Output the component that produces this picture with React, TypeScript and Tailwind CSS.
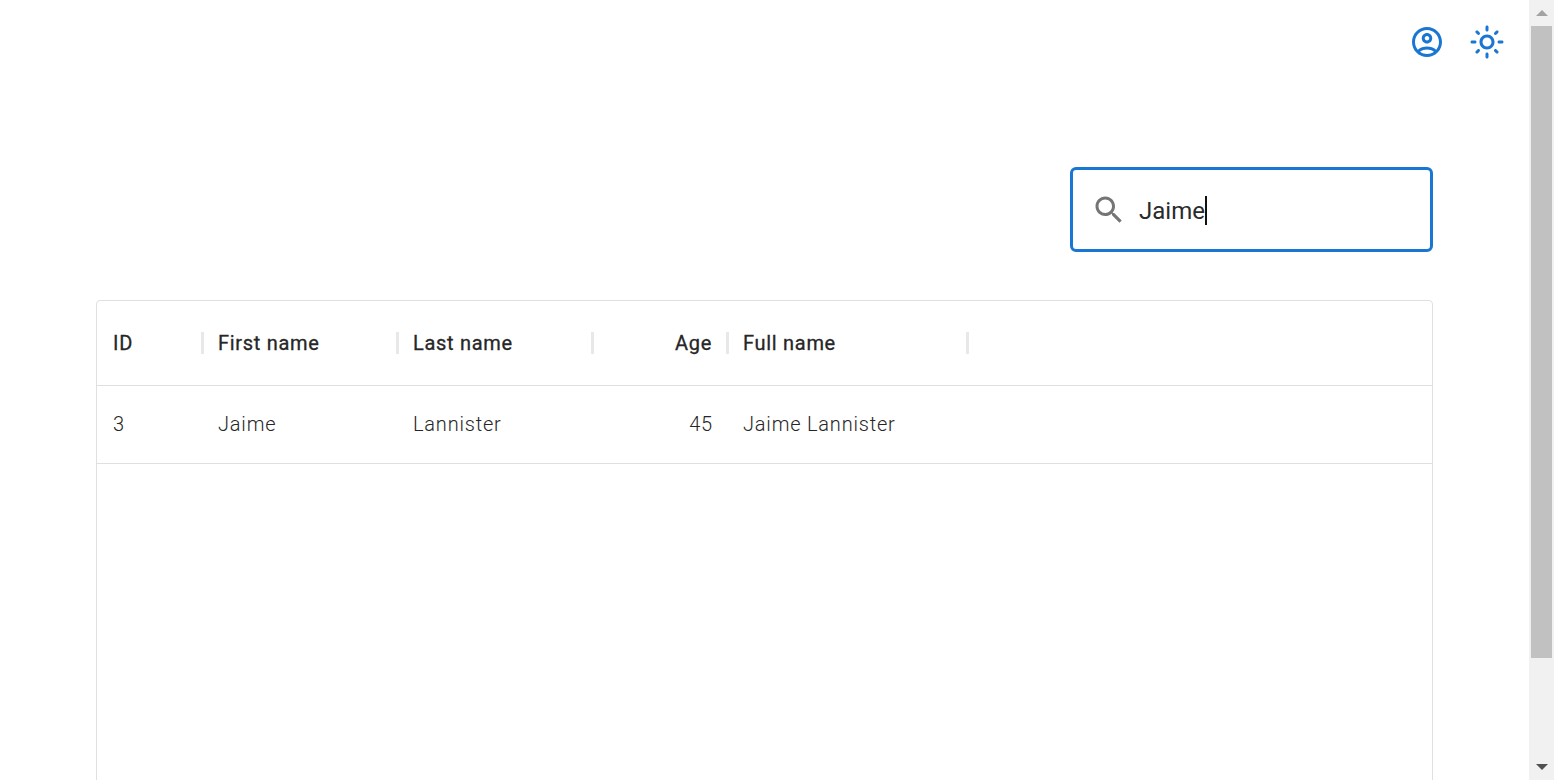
const F = { fontFamily: "Roboto, sans-serif" };

function Sep() {
  return <div className="w-[3px] h-[22px] bg-[#e8e8e8] shrink-0 -mr-[2px]" />;
}

const cols = [
  { label: "ID", value: "3", w: "w-[105px]", right: false },
  { label: "First name", value: "Jaime", w: "w-[195px]", right: false },
  { label: "Last name", value: "Lannister", w: "w-[195px]", right: false },
  { label: "Age", value: "45", w: "w-[135px]", right: true },
  { label: "Full name", value: "Jaime Lannister", w: "w-[240px]", right: false },
];

function Icon({ d, className }: { d: string; className: string }) {
  return (
    <svg viewBox="0 0 24 24" className={className} fill="currentColor">
      <path d={d} />
    </svg>
  );
}

const account =
  "M12 2C6.48 2 2 6.48 2 12s4.48 10 10 10 10-4.48 10-10S17.52 2 12 2zM7.35 18.5C8.66 17.56 10.26 17 12 17s3.34.56 4.65 1.5c-1.31.94-2.91 1.5-4.65 1.5s-3.34-.56-4.65-1.5zm10.79-1.38C16.45 15.8 14.32 15 12 15s-4.45.8-6.14 2.12C4.7 15.73 4 13.95 4 12c0-4.42 3.58-8 8-8s8 3.58 8 8c0 1.95-.7 3.73-1.86 5.12zM12 6c-1.93 0-3.5 1.57-3.5 3.5S10.07 13 12 13s3.5-1.57 3.5-3.5S13.93 6 12 6zm0 5c-.83 0-1.5-.67-1.5-1.5S11.17 8 12 8s1.5.67 1.5 1.5S12.83 11 12 11z";
const sun =
  "M12 9c1.65 0 3 1.35 3 3s-1.35 3-3 3-3-1.35-3-3 1.35-3 3-3m0-2c-2.76 0-5 2.24-5 5s2.24 5 5 5 5-2.24 5-5-2.24-5-5-5zM2 13h2c.55 0 1-.45 1-1s-.45-1-1-1H2c-.55 0-1 .45-1 1s.45 1 1 1zm18 0h2c.55 0 1-.45 1-1s-.45-1-1-1h-2c-.55 0-1 .45-1 1s.45 1 1 1zM11 2v2c0 .55.45 1 1 1s1-.45 1-1V2c0-.55-.45-1-1-1s-1 .45-1 1zm0 18v2c0 .55.45 1 1 1s1-.45 1-1v-2c0-.55-.45-1-1-1s-1 .45-1 1zM5.99 4.58c-.39-.39-1.03-.39-1.41 0-.39.39-.39 1.03 0 1.41l1.06 1.06c.39.39 1.03.39 1.41 0s.39-1.03 0-1.41L5.99 4.58zm12.37 12.37c-.39-.39-1.03-.39-1.41 0-.39.39-.39 1.03 0 1.41l1.06 1.06c.39.39 1.03.39 1.41 0 .39-.39.39-1.03 0-1.41l-1.06-1.06zm1.06-10.96c.39-.39.39-1.03 0-1.41-.39-.39-1.03-.39-1.41 0l-1.06 1.06c-.39.39-.39 1.03 0 1.41s1.03.39 1.41 0l1.06-1.06zM7.05 18.36c.39-.39.39-1.03 0-1.41-.39-.39-1.03-.39-1.41 0l-1.06 1.06c-.39.39-.39 1.03 0 1.41s1.03.39 1.41 0l1.06-1.06z";
const search =
  "M15.5 14h-.79l-.28-.27C15.41 12.59 16 11.11 16 9.5 16 5.91 13.09 3 9.5 3S3 5.91 3 9.5 5.91 16 9.5 16c1.61 0 3.09-.59 4.23-1.57l.27.28v.79l5 4.99L20.49 19l-4.99-5zm-6 0C7.01 14 5 11.99 5 9.5S7.01 5 9.5 5 14 7.01 14 9.5 11.99 14 9.5 14z";

export default function App() {
  return (
    <div className="flex h-[780px] overflow-hidden bg-white" style={F}>
      <main className="flex-1 min-w-0 flex flex-col">
        <header className="flex justify-end items-center gap-6 h-[84px] pr-[24px] shrink-0 text-[#1976d2]">
          <Icon d={account} className="w-9 h-9" />
          <Icon d={sun} className="w-9 h-9" />
        </header>

        <div className="flex justify-end pr-[96px] pt-[83px] shrink-0">
          <div className="w-[363px] h-[85px] border-[3px] border-[#1976d2] rounded-[6px] flex items-center pl-[18px]">
            <Icon d={search} className="w-9 h-9 text-[#757575] shrink-0" />
            <span className="ml-[12px] text-[24px] text-[#2a2a2a] leading-[28px] translate-y-[1px]">Jaime</span>
            <span className="w-[2px] h-[29px] bg-[#111111] translate-y-[1px]" />
          </div>
        </div>

        <div className="ml-[96px] mr-[96px] mt-[48px] h-[600px] shrink-0 border border-[#e0e0e0] rounded-[4px] text-[20px] text-[#262626]">
          <div className="flex h-[85px] border-b border-[#e0e0e0] font-normal [-webkit-text-stroke:0.3px] tracking-[0.7px]">
            {cols.map((c) => (
              <div key={c.label} className={`${c.w} flex items-center pl-4 justify-between`}>
                <span className={c.right ? "flex-1 text-right pr-[14px]" : ""}>{c.label}</span>
                <Sep />
              </div>
            ))}
          </div>
          <div className="flex h-[78px] pb-[2px] border-b border-[#e0e0e0] tracking-[0.8px] font-light">
            {cols.map((c) => (
              <div
                key={c.label}
                className={`${c.w} flex items-center pl-4 ${c.right ? "justify-end pr-[14px]" : ""}`}
              >
                {c.value}
              </div>
            ))}
          </div>
        </div>
      </main>

      <aside className="w-[25px] shrink-0 bg-[#f1f1f1] flex flex-col items-center" aria-hidden>
        <div className="h-[26px] shrink-0 flex items-center justify-center">
          <div className="w-0 h-0 border-l-[6px] border-r-[6px] border-b-[6px] border-l-transparent border-r-transparent border-b-[#a3a3a3]" />
        </div>
        <div className="w-[21px] h-[632px] bg-[#c1c1c1] shrink-0" />
        <div className="flex-1" />
        <div className="h-[26px] shrink-0 flex items-center justify-center">
          <div className="w-0 h-0 border-l-[6px] border-r-[6px] border-t-[6px] border-l-transparent border-r-transparent border-t-[#505050]" />
        </div>
      </aside>
    </div>
  );
}
